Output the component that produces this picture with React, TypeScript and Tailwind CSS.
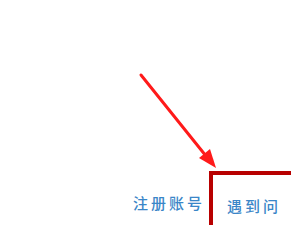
export default function App() {
  return (
    <div
      className="relative w-[291px] h-[225px] overflow-hidden bg-white"
      style={{ fontFamily: '"Noto Sans CJK SC", "Noto Sans", sans-serif' }}
    >
      {/* Bottom row: register link + highlighted help link */}
      <div className="flex pt-[171px] pl-[133px]">
        <span className="shrink-0 w-[76px] mt-[22px] text-[15px] leading-[20px] tracking-[3px] font-medium text-[#3a86c8] whitespace-nowrap">
          注册账号
        </span>
        <div className="shrink-0 w-[100px] h-[70px] border-l-4 border-t-4 border-[#b80000] pl-[14px] pt-[18px]">
          <span className="text-[15px] leading-[20px] tracking-[3px] font-medium text-[#3a86c8] whitespace-nowrap">
            遇到问
          </span>
        </div>
      </div>

      {/* Annotation arrow */}
      <svg className="absolute inset-0" width="291" height="225" viewBox="0 0 291 225">
        <line x1="141" y1="75" x2="206" y2="156" stroke="#ff1a1a" strokeWidth="3" strokeLinecap="round" />
        <polygon points="216,168 199,158 210,149" fill="#ff1a1a" />
      </svg>
    </div>
  );
}
